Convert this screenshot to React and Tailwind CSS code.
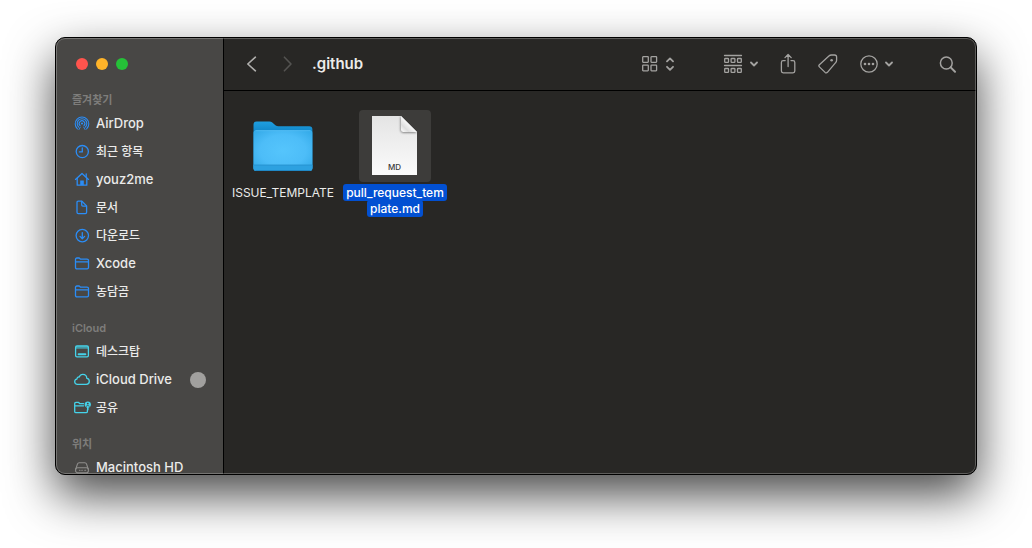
import React from "react";

function Icon({ w = 16, h = 16, top = 0, className = "", children }) {
  return (
    <svg
      width={w}
      height={h}
      viewBox={`0 ${top} ${w} ${h}`}
      className={`shrink-0 ${className}`}
      fill="none"
      stroke="currentColor"
      strokeWidth="1.3"
      strokeLinecap="round"
      strokeLinejoin="round"
      aria-hidden="true"
    >
      {children}
    </svg>
  );
}

const AirDropIcon = () => (
  <Icon top={0.6}>
    <g strokeWidth="1.1">
      <path d="M3.4 13.4A6.8 6.8 0 1 1 12.6 13.4" />
      <path d="M4.8 11.7A4.8 4.8 0 1 1 11.2 11.7" />
      <path d="M6 10.1A2.8 2.8 0 1 1 10 10.1" />
    </g>
    <path d="M8 8.6 11 14.6H5Z" fill="#484745" stroke="none" />
    <circle cx="8" cy="8.1" r="1.1" fill="currentColor" stroke="none" />
    <path d="M4.9 14.2 6.4 11.6M11.1 14.2 9.6 11.6" strokeWidth="0.9" />
  </Icon>
);
const ClockIcon = () => (
  <Icon top={0.6}>
    <circle cx="8.3" cy="8.2" r="6.1" />
    <path d="M8.3 4.6V8.5H5.4" />
  </Icon>
);
const HomeIcon = () => (
  <Icon top={0.6}>
    <path d="M1.5 8 8 2 14.5 8" />
    <path d="M3.2 6.8V13.8H12.8V6.8M12.2 2.6V5.4" />
    <path d="M6.2 13.8V9.2H9.8V13.8Z" fill="currentColor" stroke="none" />
  </Icon>
);
const DocIcon = () => (
  <Icon top={0.6}>
    <path d="M3 3.1Q3 1.8 4.3 1.8H7.9L12.6 6.5V12.9Q12.6 14.2 11.3 14.2H4.3Q3 14.2 3 12.9Z" />
    <path d="M7.7 2V5.6Q7.7 6.7 8.8 6.7H12.4" />
  </Icon>
);
const DownloadIcon = () => (
  <Icon top={0.6}>
    <circle cx="8.3" cy="8.2" r="6.2" />
    <path d="M8.3 5.2V11.1M6 9 8.3 11.3 10.6 9" />
  </Icon>
);
const FolderIcon = () => (
  <Icon top={0.6}>
    <path d="M1.5 4Q1.5 2.6 2.9 2.6H5.2L6.6 3.8H13Q14.5 3.8 14.5 5.2V12Q14.5 13.4 13.1 13.4H2.9Q1.5 13.4 1.5 12ZM1.5 6.5H14.5" />
  </Icon>
);
const DesktopIcon = () => (
  <Icon top={0.6}>
    <rect x="1.6" y="2.6" width="12.8" height="10.8" rx="1.4" />
    <path d="M1.6 3.2H14.4V5.4H1.6Z" fill="currentColor" fillOpacity="0.6" stroke="none" />
    <path d="M4.6 10.9H11.4" strokeWidth="2" />
  </Icon>
);
const CloudIcon = () => (
  <Icon top={0.6}>
    <path d="M3.5 12.9C1.7 12.9.7 11.8.7 10.3C.7 8.9 1.6 7.9 2.9 7.7C2.9 6.4 4 5.4 5.2 5.6C5.9 3.9 7.2 3 8.8 3C11 3 12.7 4.6 12.8 6.9C14.4 7.1 15.3 8.3 15.3 9.8C15.3 11.6 14.1 12.9 12.3 12.9Z" />
  </Icon>
);
const SharedIcon = () => (
  <Icon w={17} top={0.6}>
    <path d="M9.6 4.3H6L4.6 3H2Q.7 3 .7 4.3V12Q.7 13.3 2 13.3H12Q13.4 13.3 13.4 12V10.6M.7 6.4H9.6" />
    <circle cx="13.8" cy="5.2" r="3.1" fill="currentColor" stroke="none" />
    <circle cx="13.8" cy="4.2" r="0.9" fill="#484745" stroke="none" />
    <path d="M12.3 6.7Q13.8 5.1 15.3 6.7" stroke="#484745" strokeWidth="0.8" />
    <path d="M13.8 8V10.4" strokeWidth="1.6" />
  </Icon>
);
const DriveIcon = () => (
  <Icon top={0.6}>
    <g strokeWidth="1.1">
      <path d="M1.8 9.6 3.5 4.5Q3.9 3.3 5.2 3.3H10.8Q12.1 3.3 12.5 4.5L14.2 9.6" />
      <rect x="1.6" y="8.4" width="12.8" height="4.9" rx="2" />
      <path d="M5.5 10.9H6M7.8 10.9H8.3M10.8 10.9H11.6" />
    </g>
  </Icon>
);

const sections = [
  {
    title: "즐겨찾기",
    tint: "text-[#2b8df6]",
    items: [
      { label: "AirDrop", Glyph: AirDropIcon },
      { label: "최근 항목", Glyph: ClockIcon, korean: true },
      { label: "youz2me", Glyph: HomeIcon },
      { label: "문서", Glyph: DocIcon, korean: true },
      { label: "다운로드", Glyph: DownloadIcon, korean: true },
      { label: "Xcode", Glyph: FolderIcon },
      { label: "농담곰", Glyph: FolderIcon, korean: true },
    ],
  },
  {
    title: "iCloud",
    tint: "text-[#45d3ea]",
    items: [
      { label: "데스크탑", Glyph: DesktopIcon, korean: true },
      { label: "iCloud Drive", Glyph: CloudIcon, progress: true },
      { label: "공유", Glyph: SharedIcon, korean: true },
    ],
  },
  {
    title: "위치",
    tint: "text-[#8f8e8c]",
    items: [{ label: "Macintosh HD", Glyph: DriveIcon }],
  },
];

function Sidebar() {
  return (
    <aside className="flex w-42 shrink-0 flex-col overflow-hidden border-r border-black bg-[#484745]">
      <div className="flex h-13 shrink-0 items-center gap-2 pl-5">
        <button aria-label="Close" className="size-3 rounded-full bg-[#ff544d]" />
        <button aria-label="Minimize" className="size-3 rounded-full bg-[#ffb429]" />
        <button aria-label="Zoom" className="size-3 rounded-full bg-[#25c138]" />
      </div>
      <nav className="flex flex-col gap-3">
        {sections.map((s) => (
          <section key={s.title}>
            <h2 className="flex h-5 items-center pl-4 text-[11px] font-semibold text-[#7e7d7b]">
              {s.title}
            </h2>
            <ul>
              {s.items.map(({ label, Glyph, korean, progress }) => (
                <li key={label}>
                  <a href="#" className="flex h-7 items-center pr-[17px] pl-[18px]">
                    <span className={`w-[22px] shrink-0 ${s.tint}`}>
                      <Glyph />
                    </span>
                    <span
                      className={`font-medium whitespace-nowrap text-[#ebebea] ${
                        korean ? "text-[12px]" : "text-[13px]"
                      }`}
                    >
                      {label}
                    </span>
                    {progress && <span className="ml-auto size-4 rounded-full bg-[#a1a09e]" />}
                  </a>
                </li>
              ))}
            </ul>
          </section>
        ))}
      </nav>
    </aside>
  );
}

const ChevronDown = () => (
  <Icon w={8} h={6}>
    <path d="M1 1.5 4 4.5 7 1.5" strokeWidth="1.8" />
  </Icon>
);

function Toolbar() {
  return (
    <header className="flex h-[53px] shrink-0 items-center border-b border-black pr-5 pl-[22px] text-[#a3a2a0]">
      <button aria-label="Back" className="text-[#b0afad]">
        <Icon w={12} h={18}>
          <path d="M9.4 2.2 1.8 9 9.4 15.8" strokeWidth="1.6" />
        </Icon>
      </button>
      <button aria-label="Forward" disabled className="ml-6 text-[#545351]">
        <Icon w={12} h={18}>
          <path d="M2.4 2.2 9 9 2.4 15.8" strokeWidth="1.6" />
        </Icon>
      </button>
      <h1 className="ml-[18px] text-[15px] font-semibold text-[#ecebe9]">.github</h1>
      <div className="ml-auto flex items-center gap-[22px]">
        <button aria-label="View as icons" className="mr-[27px] flex items-center gap-2">
          <Icon>
            <rect x="0.7" y="0.7" width="5.6" height="5.6" rx="0.5" />
            <rect x="9" y="0.7" width="5.6" height="5.6" rx="0.5" />
            <rect x="0.7" y="9.2" width="5.6" height="5.6" rx="0.5" />
            <rect x="9" y="9.2" width="5.6" height="5.6" rx="0.5" />
          </Icon>
          <Icon w={8} h={14}>
            <path d="M1 4.4 4 1.4 7 4.4M1 9.8 4 12.8 7 9.8" strokeWidth="1.8" />
          </Icon>
        </button>
        <button aria-label="Group items" className="flex items-center gap-[7px]">
          <Icon w={20} h={20}>
            <path d="M1.5 1.5H18.5M1.5 11.5H18.5" />
            <rect x="1.7" y="4.5" width="3.8" height="3.8" rx="0.6" />
            <rect x="8.1" y="4.5" width="3.8" height="3.8" rx="0.6" />
            <rect x="14.5" y="4.5" width="3.8" height="3.8" rx="0.6" />
            <rect x="1.7" y="14.5" width="3.8" height="3.8" rx="0.6" />
            <rect x="8.1" y="14.5" width="3.8" height="3.8" rx="0.6" />
            <rect x="14.5" y="14.5" width="3.8" height="3.8" rx="0.6" />
          </Icon>
          <ChevronDown />
        </button>
        <button aria-label="Share">
          <Icon w={16} h={22}>
            <path d="M5.2 7.6H3.2Q1.4 7.6 1.4 9.4V18Q1.4 19.8 3.2 19.8H13Q14.8 19.8 14.8 18V9.4Q14.8 7.6 13 7.6H11M8.1 13.5V1.8M5 4.6 8.1 1.5 11.2 4.6" />
          </Icon>
        </button>
        <button aria-label="Tags">
          <Icon w={20} h={20}>
            <path d="M10.9 2Q12 1 13.4 1H16.5Q18.6 1 18.6 3V6.2Q18.6 7.6 17.6 8.7L9.4 18.3Q8.3 19.5 7.1 18.4L1.4 12.9Q.3 11.8 1.4 10.7Z" />
            <circle cx="13.6" cy="6.2" r="1.3" fill="currentColor" stroke="none" />
          </Icon>
        </button>
        <button aria-label="More actions" className="flex items-center gap-[7px]">
          <Icon w={18} h={18}>
            <circle cx="9" cy="9" r="8.2" />
            <g fill="currentColor" stroke="none">
              <circle cx="5" cy="9" r="1.3" />
              <circle cx="9" cy="9" r="1.3" />
              <circle cx="13" cy="9" r="1.3" />
            </g>
          </Icon>
          <ChevronDown />
        </button>
        <button aria-label="Search" className="ml-6">
          <Icon w={17} h={17}>
            <circle cx="7.3" cy="7" r="5.9" strokeWidth="1.5" />
            <path d="M11.7 11.4 16 15.7" strokeWidth="2" />
          </Icon>
        </button>
      </div>
    </header>
  );
}

function FolderArt() {
  return (
    <svg width="72" height="72" viewBox="0 0 72 72" aria-hidden="true">
      <defs>
        <linearGradient id="folder-back" x1="0" y1="0" x2="0" y2="1">
          <stop offset="0" stopColor="#1f9fe0" />
          <stop offset="0.25" stopColor="#0f82c4" />
          <stop offset="1" stopColor="#1284c6" />
        </linearGradient>
        <radialGradient id="folder-front" cx="0.5" cy="0.5" r="0.65">
          <stop offset="0" stopColor="#55c5fc" />
          <stop offset="0.6" stopColor="#4dbdf8" />
          <stop offset="1" stopColor="#35abe9" />
        </radialGradient>
      </defs>
      <path
        d="M6.5 14.8Q6.5 11.5 9.8 11.5H22.3Q24 11.5 25.3 12.6L28.4 15.2Q29.7 16.2 31.4 16.2H62.2Q65.4 16.2 65.4 19.4V57.5Q65.4 61 62.4 61H9.5Q6.5 61 6.5 57.5Z"
        fill="url(#folder-back)"
      />
      <path
        d="M6.5 23Q6.5 20.3 9.2 20.3H62.7Q65.4 20.3 65.4 23V58Q65.4 61 62.4 61H9.5Q6.5 61 6.5 58Z"
        fill="url(#folder-front)"
      />
      <path d="M8.4 20.7H63.5" stroke="#62c8fa" strokeWidth="0.6" />
      <path d="M6.5 55H65.4V58Q65.4 61 62.4 61H9.5Q6.5 61 6.5 58Z" fill="#2da1e0" />
      <path d="M6.5 55H65.4" stroke="#2490cd" strokeWidth="0.8" />
      <path d="M7.6 60.2Q8.4 61 9.5 61H62.4Q63.5 61 64.4 60.2Z" fill="#1b80bd" />
    </svg>
  );
}

function DocumentArt() {
  return (
    <svg width="72" height="72" viewBox="0 0 72 72" aria-hidden="true">
      <defs>
        <linearGradient id="paper" x1="0" y1="0" x2="0" y2="1">
          <stop offset="0" stopColor="#e4e4e4" />
          <stop offset="1" stopColor="#fbfbfb" />
        </linearGradient>
        <linearGradient id="fold" x1="0" y1="1" x2="0.5" y2="0.5">
          <stop offset="0" stopColor="#ffffff" />
          <stop offset="0.5" stopColor="#dedede" />
          <stop offset="1" stopColor="#f8f8f8" />
        </linearGradient>
        <clipPath id="paper-clip">
          <path d="M13 6H42L58 22V65H13Z" />
        </clipPath>
        <filter id="soft" x="-50%" y="-50%" width="200%" height="200%">
          <feGaussianBlur stdDeviation="1.3" />
        </filter>
      </defs>
      <path d="M13 6H42L58 22V65H13Z" fill="url(#paper)" />
      <g clipPath="url(#paper-clip)">
        <path
          d="M41.6 6V20Q41.6 22.8 44.5 22.8H58Z"
          fill="#000"
          fillOpacity="0.5"
          filter="url(#soft)"
        />
      </g>
      <path d="M42 6V19.5Q42 22 44.5 22H58Z" fill="url(#fold)" />
      <text
        x="35.5"
        y="60"
        textAnchor="middle"
        className="font-['Inter','Liberation_Sans',sans-serif] text-[8px] font-medium"
        fill="#3a3a3a"
      >
        MD
      </text>
    </svg>
  );
}

function FileItem({ art, lines, selected }) {
  return (
    <li className="w-28">
      <button className="flex w-full flex-col items-center">
        <span className={`rounded-[4px] ${selected ? "bg-[#3d3c3a]" : ""}`}>{art}</span>
        <span className="mt-[3px] text-center text-[12px] leading-4 whitespace-nowrap text-[#ebebea]">
          {lines.map((line) => (
            <span key={line} className="block">
              <span
                className={
                  selected ? "rounded-[3px] bg-[#0250d2] px-[3px] py-px font-medium text-white" : ""
                }
              >
                {line}
              </span>
            </span>
          ))}
        </span>
      </button>
    </li>
  );
}

export default function App() {
  return (
    <div className="flex h-screen flex-col bg-white px-[55px] pt-[37px] pb-[73px] font-['Inter','Noto_Sans_CJK_KR',sans-serif]">
      <div className="relative flex min-h-0 flex-1 overflow-hidden rounded-[10px] border border-black bg-[#282725] shadow-[0_20px_48px_rgba(0,0,0,0.72)]">
        <Sidebar />
        <main className="flex min-w-0 flex-1 flex-col">
          <Toolbar />
          <ul className="flex flex-wrap pt-[19px] pl-[3px]">
            <FileItem art={<FolderArt />} lines={["ISSUE_TEMPLATE"]} />
            <FileItem art={<DocumentArt />} lines={["pull_request_tem", "plate.md"]} selected />
          </ul>
        </main>
        <div className="pointer-events-none absolute inset-0 rounded-[9px] border border-white/25" />
      </div>
    </div>
  );
}
